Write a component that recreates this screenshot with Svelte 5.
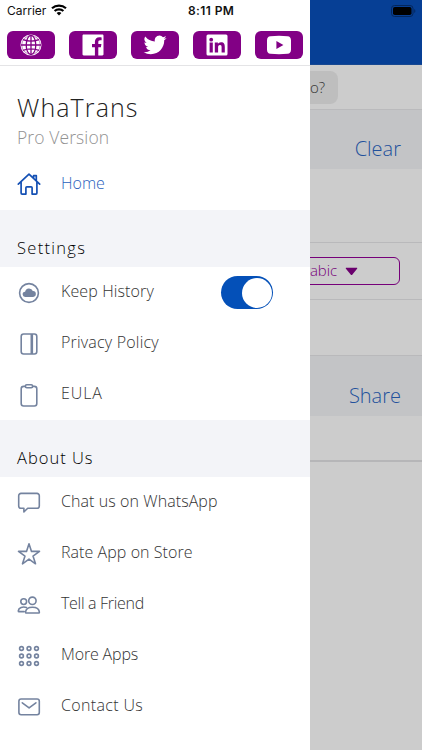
<script lang="ts">
  type Item = { icon: string; label: string; spacing: number; toggle?: boolean };

  const socials = ["globe", "facebook", "twitter", "linkedin", "youtube"];

  const settings: Item[] = [
    { icon: "cloud", label: "Keep History", spacing: 0.12, toggle: true },
    { icon: "book", label: "Privacy Policy", spacing: 0.2 },
    { icon: "clipboard", label: "EULA", spacing: 0.9 },
  ];

  const about: Item[] = [
    { icon: "chat", label: "Chat us on WhatsApp", spacing: 0.08 },
    { icon: "star", label: "Rate App on Store", spacing: 0.06 },
    { icon: "people", label: "Tell a Friend", spacing: -0.3 },
    { icon: "grid", label: "More Apps", spacing: -0.15 },
    { icon: "mail", label: "Contact Us", spacing: 0.35 },
  ];

  const dots = [4.5, 12, 19.5];

  let keepHistory = $state(true);
</script>

{#snippet row(item: Item)}
  <div class="row">
    <svg class="icon" viewBox="0 0 24 24">
      {#if item.icon === "cloud"}
        <circle cx="12" cy="12" r="9.4" />
        <path class="solid" d="M8.400 15.900a2.600 2.600 0 0 1-.3-5.200 4 4 0 0 1 7.700-.6 2.900 2.900 0 0 1 .3 5.800z" />
      {:else if item.icon === "book"}
        <rect x="4.200" y="2" width="15.600" height="20" rx="2.400" />
        <path class="thick" d="M14.800 2v20" />
      {:else if item.icon === "clipboard"}
        <rect x="4.200" y="3.400" width="15.600" height="19.600" rx="2.400" />
        <rect class="paper" x="8.400" y="1.700" width="7.200" height="3" rx="1.400" />
      {:else if item.icon === "chat"}
        <path d="M4 2.400h16a2.300 2.300 0 0 1 2.300 2.300v10.300a2.300 2.300 0 0 1-2.300 2.300H10.700L6.900 21V17.300H4A2.300 2.300 0 0 1 1.700 15V4.700A2.300 2.300 0 0 1 4 2.400z" />
      {:else if item.icon === "star"}
        <path d="M12 1.700l2.500 7.700h8l-6.500 4.700 2.500 7.700-6.500-4.700-6.500 4.700L8 14.100 1.500 9.400h8z" />
      {:else if item.icon === "people"}
        <circle cx="6.700" cy="8.600" r="2.900" />
        <circle cx="15.400" cy="7.800" r="3.700" />
        <path d="M8.500 19.300c.3-3.300 3-5.100 6.900-5.100s6.800 1.800 7 5.100c0 .4-.3.700-.7.700H9.200c-.4 0-.7-.3-.7-.7z" />
        <path d="M9.500 14.500c-3.700-1.300-7.900.2-8.200 3.400 0 .4.300.7.700.7h5.200" />
      {:else if item.icon === "grid"}
        {#each dots as cy}
          {#each dots as cx}
            <circle {cx} {cy} r="1.900" />
          {/each}
        {/each}
      {:else if item.icon === "mail"}
        <rect x="1.900" y="4" width="20.400" height="15.800" rx="2.200" />
        <path d="M5.300 7.800l6.800 5.100 6.800-5.100" />
      {/if}
    </svg>
    <span class="label" style="letter-spacing: {item.spacing}px">{item.label}</span>
    {#if item.toggle}
      <button
        class="toggle"
        class:on={keepHistory}
        aria-label={item.label}
        onclick={() => (keepHistory = !keepHistory)}
      ><span class="knob"></span></button>
    {/if}
  </div>
{/snippet}

<div class="screen">
  <main class="page">
    <div class="topbar">
      <svg class="battery" viewBox="0 0 26 12">
        <rect x="0.500" y="0.500" width="21.500" height="11" rx="3" fill="none" stroke="#04275c" />
        <rect x="2" y="2" width="18.500" height="8" rx="1.800" fill="#000" />
        <path d="M23.300 4v4c1.400-.6 1.400-3.400 0-4z" fill="#04275c" />
      </svg>
    </div>
    <div class="chips"><span class="chip">What are you up to?</span></div>
    <div class="band first"><span>Clear</span></div>
    <div class="blank input"></div>
    <div class="language">
      <div class="select">
        <span>Arabic</span>
        <svg viewBox="0 0 14 9"><path d="M1.500.5h11c.7 0 .9.600.5 1.100L7.800 7.900c-.4.500-1.100.500-1.500 0L1 1.600C.6 1.100.8.500 1.500.5z" /></svg>
      </div>
    </div>
    <div class="blank small"></div>
    <div class="band second"><span>Share</span></div>
    <div class="blank output"></div>
  </main>

  <aside class="drawer">
    <header>
      <div class="status">
        <span class="carrier">Carrier</span>
        <svg class="wifi" viewBox="0 0 16 12">
          <path d="M1 4.300a10.300 10.300 0 0 1 14 0M3.600 7a6.500 6.500 0 0 1 8.800 0" />
          <path class="tip" d="M8 11.600L5.600 9.100a3.500 3.500 0 0 1 4.800 0z" />
        </svg>
        <span class="time">8:11 PM</span>
      </div>
      <nav class="socials">
        {#each socials as social}
          <a class="social" href="#{social}" aria-label={social}>
            <svg viewBox="0 0 24 24">
              {#if social === "globe"}
                <circle cx="12" cy="12" r="10.500" fill="#fff" />
                <g fill="none" stroke="#820085" stroke-width="1.300">
                  <ellipse cx="12" cy="12" rx="4.800" ry="9.600" />
                  <circle cx="12" cy="12" r="9.300" stroke-width=".5" />
                  <path d="M12 2v20M2 12h20M4 6.700q8 3 16 0M4 17.300q8-3 16 0" />
                </g>
              {:else if social === "facebook"}
                <path fill="#fff" d="M2.700 1.500h18.600c.7 0 1.200.5 1.200 1.200v18.600c0 .7-.5 1.200-1.200 1.200H17.300v-8.200h2.600l.5-3.300h-3.100V9c0-1 .5-1.800 1.900-1.800h1.400V4.400c-.6-.1-1.300-.2-2.200-.2-2.800 0-4.500 1.700-4.500 4.600V11H11v3.300h2.900v8.200H2.700c-.7 0-1.200-.5-1.200-1.200V2.700c0-.7.5-1.200 1.200-1.200z" />
              {:else if social === "twitter"}
                <path fill="#fff" d="M23.600 4.900a9.500 9.500 0 0 1-2.700.7 4.700 4.700 0 0 0 2.100-2.600 9.500 9.500 0 0 1-3 1.200 4.700 4.700 0 0 0-8.100 4.300A13.400 13.400 0 0 1 2.200 3.500a4.700 4.700 0 0 0 1.400 6.300 4.700 4.700 0 0 1-2.100-.6 4.700 4.700 0 0 0 3.800 4.700 4.700 4.700 0 0 1-2.200.1 4.700 4.700 0 0 0 4.400 3.300A9.500 9.500 0 0 1 .6 19.200a13.400 13.400 0 0 0 7.200 2.100c8.700 0 13.700-7.300 13.400-14a9.600 9.600 0 0 0 2.400-2.400z" />
              {:else if social === "linkedin"}
                <rect x="1.500" y="1.500" width="21" height="21" rx="1.500" fill="#fff" />
                <g fill="#820085">
                  <circle cx="6.200" cy="6.700" r="1.900" />
                  <path d="M4.600 9.600h3.200v9.900H4.600zM9.800 9.600h3.100v1.400c.5-.9 1.600-1.700 3.100-1.700 3.200 0 3.800 2.100 3.800 4.800v5.400h-3.200v-4.800c0-1.200 0-2.600-1.600-2.600s-1.900 1.200-1.900 2.500v4.900H9.800z" />
                </g>
              {:else}
                <path fill="#fff" d="M3.500 3.200q8.500-.8 17 0c2.500.2 3.300 1.500 3.500 4q.4 4.800 0 9.600c-.2 2.500-1 3.800-3.500 4q-8.500.8-17 0c-2.500-.2-3.300-1.500-3.500-4q-.4-4.800 0-9.600c.2-2.500 1-3.800 3.500-4zM9.400 7.900v8.200l7-4.100z" />
              {/if}
            </svg>
          </a>
        {/each}
      </nav>
    </header>

    <div class="brand">
      <h1>WhaTrans</h1>
      <p>Pro Version</p>
    </div>

    <div class="row home">
      <svg class="icon" viewBox="0 0 24 24">
        <path d="M1.300 12.200L12 2.200l10.700 10M4.100 10.300v10.800c0 .6.400 1 1 1h3.800v-6.300c0-.6.400-1 1-1h4.200c.6 0 1 .4 1 1v6.300h3.800c.6 0 1-.4 1-1V10.300M16.600 5.800V3.600h2.700v5" />
      </svg>
      <span class="label">Home</span>
    </div>

    <h2>Settings</h2>
    {#each settings as item}
      {@render row(item)}
    {/each}

    <h2 class="about">About Us</h2>
    {#each about as item}
      {@render row(item)}
    {/each}
  </aside>
</div>

<style>
  :global(body) {
    margin: 0;
  }

  .screen {
    position: relative;
    width: 422px;
    height: 750px;
    overflow: hidden;
    font-family: "Open Sans", "Noto Sans", sans-serif;
    font-weight: 300;
    background: #cccccc;
  }

  /* dimmed page behind the drawer */
  .page {
    display: flex;
    flex-direction: column;
  }
  .topbar {
    height: 65px;
    box-sizing: border-box;
    padding: 5px 5px 0 0;
    display: flex;
    justify-content: flex-end;
    background: #063f95;
    border-bottom: 1px solid #174891;
  }
  .battery {
    width: 26px;
    height: 12px;
  }
  .chips {
    height: 45px;
    box-sizing: border-box;
    padding: 6px 84px 0 0;
    display: flex;
    justify-content: flex-end;
    align-items: flex-start;
    border-bottom: 1px solid #bababc;
  }
  .chip {
    height: 33px;
    line-height: 32px;
    padding: 0 13px;
    border-radius: 8px;
    background: #bebebe;
    color: #333;
    font-size: 15px;
  }
  .band {
    box-sizing: border-box;
    padding-right: 21px;
    display: flex;
    justify-content: flex-end;
    background: #c3c4c6;
    color: #22519c;
    font-size: 20px;
    line-height: 28px;
  }
  .first {
    height: 59px;
    padding-top: 25px;
  }
  .second {
    height: 60px;
    padding-top: 26px;
  }
  .blank {
    box-sizing: border-box;
    border-bottom: 1px solid #b9b9bb;
  }
  .input {
    height: 74px;
  }
  .language {
    height: 57px;
    box-sizing: border-box;
    padding: 14px 22px 0 0;
    display: flex;
    justify-content: flex-end;
    border-bottom: 1px solid #b9b9bb;
  }
  .select {
    width: 160px;
    height: 28px;
    box-sizing: border-box;
    padding-right: 41px;
    display: flex;
    align-items: center;
    justify-content: flex-end;
    gap: 8px;
    border: 1px solid #760079;
    border-radius: 6px;
    color: #760079;
    font-size: 15px;
    line-height: 24px;
  }
  .select span {
    padding-bottom: 3px;
    letter-spacing: -0.1px;
  }
  .select svg {
    width: 13px;
    height: 9px;
    fill: #6a006d;
  }
  .small {
    height: 56px;
  }
  .output {
    height: 46px;
    border-bottom: 2px solid #b6b6b8;
  }

  .drawer {
    position: absolute;
    top: 0;
    left: 0;
    width: 310px;
    height: 750px;
    display: flex;
    flex-direction: column;
    background: #fff;
  }
  header {
    height: 66px;
    box-sizing: border-box;
    border-bottom: 1px solid #e4e4e6;
  }
  .status {
    height: 31px;
    box-sizing: border-box;
    padding: 3px 0 0 7px;
    display: flex;
    align-items: flex-start;
    font-family: Inter, sans-serif;
    font-weight: 400;
    font-size: 12px;
    line-height: 16px;
    color: #111;
  }
  .carrier {
    width: 39px;
  }
  .wifi {
    width: 16px;
    height: 12px;
    margin: 1px 0 0 5px;
    fill: none;
    stroke: #000;
    stroke-width: 2.2;
  }
  .wifi .tip {
    fill: #000;
    stroke: none;
  }
  .time {
    margin-left: 121px;
    font-weight: 600;
    letter-spacing: 0.4px;
  }
  .socials {
    display: flex;
    gap: 14px;
    padding-left: 7px;
  }
  .social {
    width: 48px;
    height: 28px;
    display: flex;
    align-items: center;
    justify-content: center;
    border-radius: 6px;
    background: #820085;
  }
  .social svg {
    width: 24px;
    height: 24px;
  }

  .brand {
    height: 92px;
    box-sizing: border-box;
    padding: 24px 0 0 17px;
  }
  h1 {
    margin: 0;
    font-size: 25px;
    line-height: 34px;
    font-weight: 300;
    letter-spacing: 1.1px;
    color: #222;
  }
  .brand p {
    margin: 0;
    font-size: 17.5px;
    line-height: 26px;
    letter-spacing: 0.1px;
    color: #929292;
  }
  h2 {
    flex: none;
    height: 57px;
    box-sizing: border-box;
    margin: 0;
    padding: 27px 0 0 17px;
    font-size: 16.5px;
    line-height: 22px;
    font-weight: 300;
    letter-spacing: 1.3px;
    color: #000;
    background: #f3f4f8;
  }
  .about {
    letter-spacing: 1px;
  }

  .row {
    height: 51px;
    flex: none;
    display: flex;
    align-items: center;
    padding: 0 37px 0 17px;
  }
  .home {
    height: 52px;
  }
  .icon {
    width: 24px;
    height: 24px;
    margin-right: 20px;
    fill: none;
    stroke: #74839f;
    stroke-width: 1.6;
    stroke-linejoin: round;
    stroke-linecap: round;
  }
  .home .icon {
    stroke: #1450b4;
    stroke-width: 1.7;
  }
  .icon .solid {
    fill: #74839f;
    stroke: none;
  }
  .icon .thick {
    stroke-width: 2.6;
    stroke-linecap: butt;
  }
  .icon .paper {
    fill: #fff;
  }
  .label {
    flex: 1;
    font-size: 16px;
    line-height: 22px;
    padding-bottom: 3px;
    white-space: nowrap;
    color: #333;
  }
  .home .label {
    color: #2a5fbd;
  }
  .toggle {
    width: 52px;
    height: 33px;
    box-sizing: border-box;
    padding: 1px;
    border: 0;
    border-radius: 17px;
    display: flex;
    align-items: center;
    background: #ccc;
  }
  .toggle.on {
    justify-content: flex-end;
    background: #0450b8;
  }
  .knob {
    width: 30px;
    height: 30px;
    border-radius: 50%;
    background: #fff;
  }
</style>
